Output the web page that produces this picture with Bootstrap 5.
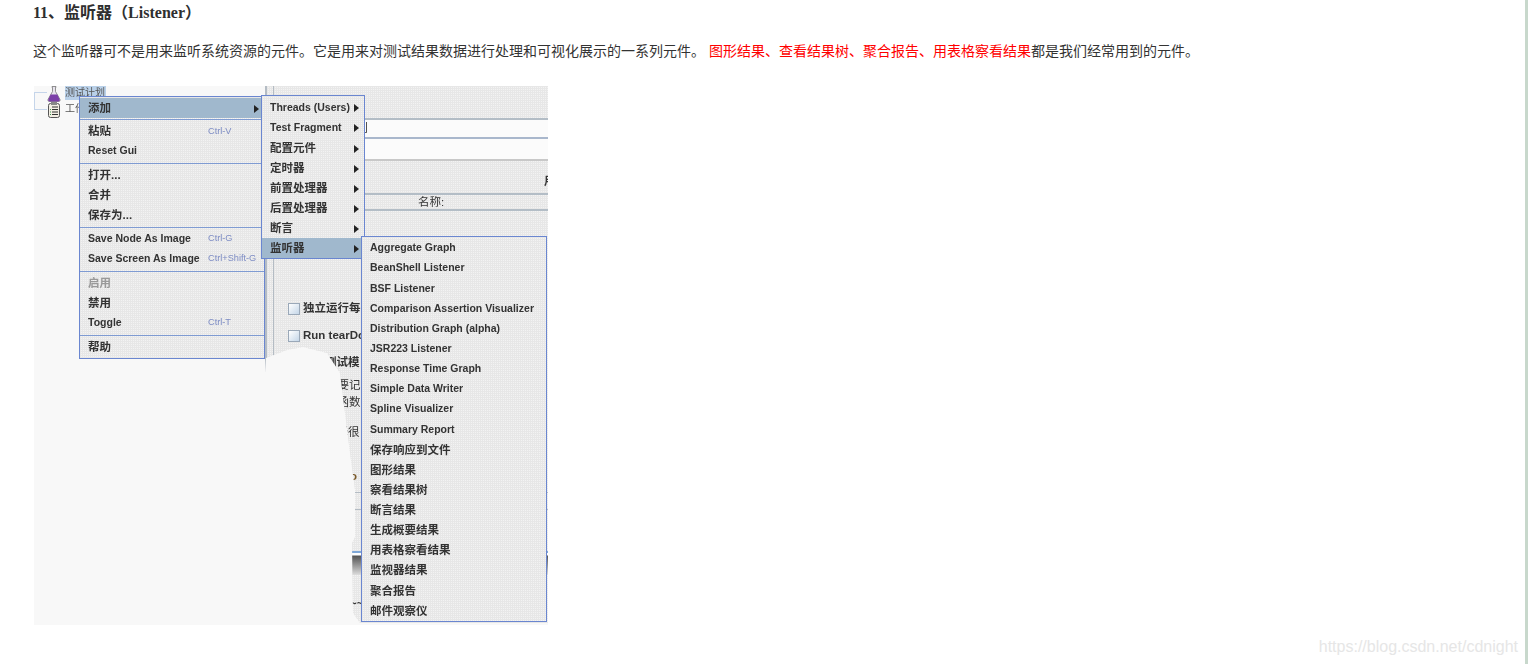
<!DOCTYPE html>
<html lang="zh-CN">
<head>
    <meta charset="UTF-8">
    <meta name="viewport" content="width=device-width, initial-scale=1.0">
    <title>11、监听器（Listener）</title>
    <link href="https://cdn.jsdelivr.net/npm/bootstrap@5.3.0/dist/css/bootstrap.min.css" rel="stylesheet">
    <style>
        html, body { height: 100%; }
        body { font-family: "Liberation Sans", "Noto Sans CJK SC", sans-serif; background: #fff; overflow: hidden; }
        .page-wrap { height: 664px; }
        .post-body { padding: 4px 0 0 33px; color: #333; }
        .post-title { font-family: "Liberation Serif", "Noto Sans CJK SC", serif; font-size: 16px; font-weight: 700; line-height: 18px; margin: 0 0 17px; color: #2f2f2f; }
        .post-text { font-size: 14px; line-height: 24px; margin: 0 0 23px; color: #333; }
        .hl-red { color: #f00; }
        .side-line { width: 3px; background: #c8d8cc; }
        .watermark { right: 10px; bottom: 7px; font-size: 16px; color: #e6e6e6; line-height: 20px; }

        /* 截图区域 */
        .shot { width: 514px; height: 539px; margin-left: 1px; background: #f8f8f8; filter: blur(.3px); }
        .dither { background-color: #f3f3f3; background-image: linear-gradient(#e7e7e7 1px, transparent 1px), linear-gradient(90deg, #e7e7e7 1px, transparent 1px); background-size: 2px 2px; }

        .tree-box { left: 0; top: 6px; width: 13px; height: 18px; border: 1px solid #c5d5ea; border-right: 0; }
        .tree-ico { left: 13px; }
        .tree-ico-a { top: 0; }
        .tree-ico-b { top: 16px; }
        .tree-label { left: 31px; font-size: 10px; line-height: 14px; color: #555; white-space: nowrap; }
        .tree-sel { background: #b9d0e8; top: 0; width: 41px; height: 14px; }
        .tree-plain { top: 16px; }

        .jm-pane { left: 231px; top: 0; width: 283px; height: 539px;
            clip-path: polygon(0 287px, 1px 272px, 22px 264px, 38px 261px, 62px 267px, 75px 287px, 80px 327px, 85px 367px, 90px 404px, 90px 451px, 87px 457px, 88px 527px, 95px 537px, 283px 537px, 283px 0, 0 0); }
        .jm-split { width: 9px; border-left: 2px solid #b4bcc4; border-right: 1px solid #b4bcc4; height: 286px; }
        .jm-body { font-size: 11.5px; font-weight: 700; color: #333; }
        .jm-gap { height: 32px; }
        .jm-field { border-top: 2px solid #b3bdc6; white-space: nowrap; }
        .jm-field-a { height: 19px; background: #fbfbfb; padding-left: 48px; line-height: 17px; font-weight: 400; }
        .jm-field-b { height: 22px; background: #fbfbfb; border-top-color: #a9b7cc; }
        .jm-field-c { height: 34px; padding-left: 270px; line-height: 40px; border-top-color: #c8c8c8; }
        .jm-field-d { height: 16px; padding-left: 144px; line-height: 15px; font-weight: 400; }
        .jm-field-e { height: 86px; }
        .jm-check { height: 27px; padding-left: 14px; gap: 3px; white-space: nowrap; }
        .jm-box { width: 12px; height: 12px; border: 1px solid #9aa8b8; background: linear-gradient(135deg, #fff, #c4d6e8); flex: none; }
        .jm-frag { white-space: nowrap; }
        .jm-frag-a { height: 25px; padding: 5px 0 0 28px; }
        .jm-frag-b { height: 15px; padding: 3px 0 0 29px; font-weight: 400; }
        .jm-frag-c { height: 31px; padding: 5px 0 0 29px; font-weight: 400; }
        .jm-frag-d { height: 48px; padding: 4px 0 0 51px; font-weight: 400; }
        .jm-frag-e { height: 24px; padding-left: 76px; color: #7a5a2a; }
        .jm-frag-f { height: 30px; padding: 20px 0 0 76px; }
        .jm-rule { height: 1px; background: #b4bcc4; }
        .jm-rule-a { margin-bottom: 16px; }
        .jm-rule-b { margin-bottom: 41px; }
        .jm-band { height: 24px; border-top: 2px solid #7fa8d8; background: linear-gradient(#fff 2px, #555 3px, #ddd); }

        /* 菜单 */
        .jm-menu { font-size: 11.5px; font-weight: 700; color: #333; border: 1px solid #6a86d0; }
        .menu-main { left: 45px; top: 10px; width: 186px; padding: 1px 0; }
        .menu-sub { left: 227px; top: 9px; width: 104px; padding: 2px 0 0; height: 164px; }
        .menu-list { left: 327px; top: 150px; width: 186px; padding: 1px 0 0; height: 386px; }
        .menu-row { height: 20px; padding: 1px 5px 0 8px; white-space: nowrap; }
        .menu-list .menu-row { height: 20.17px; }
        .menu-row.is-lat { font-size: 10.5px; padding-top: 0; }
        .menu-row.is-active { background: #a0b8cd; }
        .menu-row.is-off { color: #999; }
        .menu-sep { height: 4px; padding-top: 2px; }
        .menu-sep:nth-child(2) { height: 3px; padding-top: 1px; }
        .menu-sep::after { content: ""; display: block; height: 1px; background: #7f9bd2; }
        .menu-key { position: absolute; left: 128px; font-size: 9.2px; font-weight: 400; color: #7d8cc4; }
        .menu-arrow { width: 0; height: 0; border-left: 5px solid #222; border-top: 4px solid transparent; border-bottom: 4px solid transparent; margin-left: auto; }
    </style>
</head>
<body>
    <div class="page-wrap d-flex position-relative">
        <div class="post-body flex-grow-1">
            <h4 class="post-title">11、监听器（Listener）</h4>
            <p class="post-text">这个监听器可不是用来监听系统资源的元件。它是用来对测试结果数据进行处理和可视化展示的一系列元件。 <span class="hl-red">图形结果、查看结果树、聚合报告、用表格察看结果</span>都是我们经常用到的元件。</p>

            <div class="shot position-relative overflow-hidden">
                <!-- 左侧树 -->
                <div class="tree-box position-absolute"></div>
                <svg class="tree-ico tree-ico-a position-absolute" width="14" height="16" viewBox="0 0 14 16">
                    <path d="M5 .5h4v1H8.500v4l4.500 8c.4 1-.3 2-1.300 2H2.300c-1 0-1.700-1-1.300-2l4.500-8v-4H5z" fill="#e8e4ee" stroke="#777" stroke-width=".8"/>
                    <path d="M3.600 8.500h6.800l2.300 5c.3 1-.3 2-1.200 2H2.500c-.9 0-1.500-1-1.200-2z" fill="#7b3fa8"/>
                </svg>
                <svg class="tree-ico tree-ico-b position-absolute" width="14" height="16" viewBox="0 0 14 16">
                    <rect x="1.500" y="1.500" width="11" height="14" rx="2" fill="#f3efe4" stroke="#555"/>
                    <rect x="4" y="0" width="6" height="3" fill="#888"/>
                    <path d="M5 5h6M5 7.500h6M5 10h6M5 12.500h6" stroke="#333"/>
                    <path d="M3 7.500h1M3 10h1M3 12.500h1" stroke="#3a9a4a"/>
                </svg>
                <div class="tree-label tree-sel position-absolute">测试计划</div>
                <div class="tree-label tree-plain position-absolute">工作台</div>

                <!-- 被遮挡的 JMeter 主面板 -->
                <div class="jm-pane position-absolute d-flex overflow-hidden">
                    <div class="jm-split dither flex-shrink-0"></div>
                    <div class="jm-body dither flex-grow-1 overflow-hidden">
                        <div class="jm-gap"></div>
                        <div class="jm-field jm-field-a">测试计划</div>
                        <div class="jm-field jm-field-b"></div>
                        <div class="jm-field jm-field-c">用</div>
                        <div class="jm-field jm-field-d">名称:</div>
                        <div class="jm-field jm-field-e"></div>
                        <div class="jm-check d-flex align-items-center"><span class="jm-box"></span>独立运行每</div>
                        <div class="jm-check d-flex align-items-center"><span class="jm-box"></span>Run tearDow</div>
                        <div class="jm-frag jm-frag-a">函数测试模</div>
                        <div class="jm-frag jm-frag-b">只有需要记</div>
                        <div class="jm-frag jm-frag-c">时才需函数</div>
                        <div class="jm-frag jm-frag-d">选择很</div>
                        <div class="jm-frag jm-frag-e">o</div>
                        <div class="jm-rule jm-rule-a"></div>
                        <div class="jm-rule jm-rule-b"></div>
                        <div class="jm-band"></div>
                        <div class="jm-frag jm-frag-f">~~</div>
                    </div>
                </div>

                <!-- 右键菜单 -->
                <div class="jm-menu menu-main dither position-absolute">
                    <div class="menu-row is-active d-flex align-items-center">添加<span class="menu-arrow"></span></div>
                    <div class="menu-sep"></div>
                    <div class="menu-row d-flex align-items-center">粘贴<span class="menu-key">Ctrl-V</span></div>
                    <div class="menu-row is-lat d-flex align-items-center">Reset Gui</div>
                    <div class="menu-sep"></div>
                    <div class="menu-row d-flex align-items-center">打开...</div>
                    <div class="menu-row d-flex align-items-center">合并</div>
                    <div class="menu-row d-flex align-items-center">保存为...</div>
                    <div class="menu-sep"></div>
                    <div class="menu-row is-lat d-flex align-items-center">Save Node As Image<span class="menu-key">Ctrl-G</span></div>
                    <div class="menu-row is-lat d-flex align-items-center">Save Screen As Image<span class="menu-key">Ctrl+Shift-G</span></div>
                    <div class="menu-sep"></div>
                    <div class="menu-row is-off d-flex align-items-center">启用</div>
                    <div class="menu-row d-flex align-items-center">禁用</div>
                    <div class="menu-row is-lat d-flex align-items-center">Toggle<span class="menu-key">Ctrl-T</span></div>
                    <div class="menu-sep"></div>
                    <div class="menu-row d-flex align-items-center">帮助</div>
                </div>

                <div class="jm-menu menu-sub dither position-absolute">
                    <div class="menu-row is-lat d-flex align-items-center">Threads (Users)<span class="menu-arrow"></span></div>
                    <div class="menu-row is-lat d-flex align-items-center">Test Fragment<span class="menu-arrow"></span></div>
                    <div class="menu-row d-flex align-items-center">配置元件<span class="menu-arrow"></span></div>
                    <div class="menu-row d-flex align-items-center">定时器<span class="menu-arrow"></span></div>
                    <div class="menu-row d-flex align-items-center">前置处理器<span class="menu-arrow"></span></div>
                    <div class="menu-row d-flex align-items-center">后置处理器<span class="menu-arrow"></span></div>
                    <div class="menu-row d-flex align-items-center">断言<span class="menu-arrow"></span></div>
                    <div class="menu-row is-active d-flex align-items-center">监听器<span class="menu-arrow"></span></div>
                </div>

                <div class="jm-menu menu-list dither position-absolute">
                    <div class="menu-row is-lat d-flex align-items-center">Aggregate Graph</div>
                    <div class="menu-row is-lat d-flex align-items-center">BeanShell Listener</div>
                    <div class="menu-row is-lat d-flex align-items-center">BSF Listener</div>
                    <div class="menu-row is-lat d-flex align-items-center">Comparison Assertion Visualizer</div>
                    <div class="menu-row is-lat d-flex align-items-center">Distribution Graph (alpha)</div>
                    <div class="menu-row is-lat d-flex align-items-center">JSR223 Listener</div>
                    <div class="menu-row is-lat d-flex align-items-center">Response Time Graph</div>
                    <div class="menu-row is-lat d-flex align-items-center">Simple Data Writer</div>
                    <div class="menu-row is-lat d-flex align-items-center">Spline Visualizer</div>
                    <div class="menu-row is-lat d-flex align-items-center">Summary Report</div>
                    <div class="menu-row d-flex align-items-center">保存响应到文件</div>
                    <div class="menu-row d-flex align-items-center">图形结果</div>
                    <div class="menu-row d-flex align-items-center">察看结果树</div>
                    <div class="menu-row d-flex align-items-center">断言结果</div>
                    <div class="menu-row d-flex align-items-center">生成概要结果</div>
                    <div class="menu-row d-flex align-items-center">用表格察看结果</div>
                    <div class="menu-row d-flex align-items-center">监视器结果</div>
                    <div class="menu-row d-flex align-items-center">聚合报告</div>
                    <div class="menu-row d-flex align-items-center">邮件观察仪</div>
                </div>
            </div>
        </div>
        <div class="side-line flex-shrink-0"></div>
        <div class="watermark position-absolute">https://blog.csdn.net/cdnight</div>
    </div>

    <script src="https://cdn.jsdelivr.net/npm/bootstrap@5.3.0/dist/js/bootstrap.bundle.min.js"></script>
</body>
</html>
